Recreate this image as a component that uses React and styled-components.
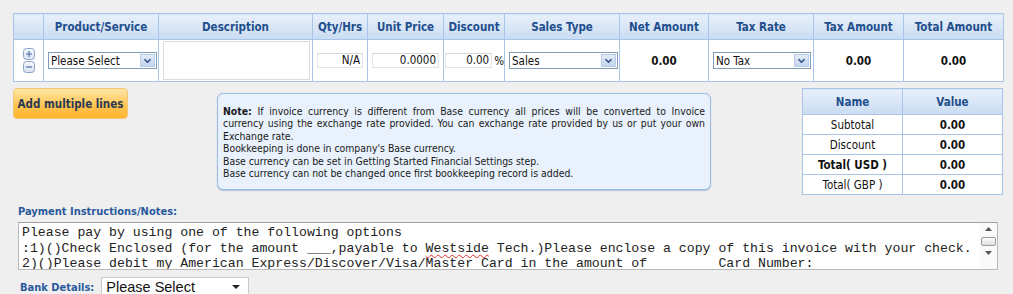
import React from "react";
import styled, { createGlobalStyle } from "styled-components";

const GlobalStyle = createGlobalStyle`
  body {
    margin: 0;
    background: #efefef;
    font-family: "DejaVu Sans Condensed", "DejaVu Sans", sans-serif;
    color: #111;
  }
`;

const Page = styled.div`
  width: 1013px;
  box-sizing: border-box;
  padding: 13px 10px 0 13px;
`;

const LineTable = styled.table`
  border-collapse: collapse;
  table-layout: fixed;
  width: 990px;
  background: #fff;
`;

const Th = styled.th`
  height: 25px;
  padding: 0;
  border: 1px solid #a9c4e8;
  background: linear-gradient(#e8f0fa, #c9dcf3);
  color: #1f4e8c;
  font-size: 11.5px;
  font-weight: bold;
  text-align: center;
`;

const Td = styled.td`
  height: 41px;
  padding: 0 4px;
  border: 1px solid #a9c4e8;
  text-align: center;
  font-size: 11.5px;
  font-weight: ${(p) => (p.$bold ? "bold" : "normal")};
`;

const PlusMinus = styled.div`
  display: flex;
  flex-direction: column;
  align-items: center;
  gap: 1px;
`;

const SmallBtn = styled.svg`
  display: block;
`;

const FakeSelect = styled.div`
  display: flex;
  align-items: center;
  width: ${(p) => p.$w}px;
  height: 17px;
  box-sizing: border-box;
  border: 1px solid #7f9db9;
  background: #fff;
  font-size: 11.5px;
  text-align: left;
`;

const SelectText = styled.span`
  flex: 1;
  padding-left: 2px;
  white-space: nowrap;
  overflow: hidden;
`;

const SelectArrow = styled.span`
  width: 15px;
  height: 13px;
  margin-right: 1px;
  display: flex;
  align-items: center;
  justify-content: center;
  background: linear-gradient(#e3ebf7, #c4d5ee);
  border: 1px solid #b8cbe8;
  box-sizing: border-box;
`;

const DescBox = styled.div`
  width: 147px;
  height: 39px;
  margin: 0 auto;
  border: 1px solid #dcdcdc;
  box-sizing: border-box;
  background: #fff;
`;

const NumInput = styled.div`
  width: ${(p) => p.$w}px;
  height: 15px;
  box-sizing: border-box;
  border: 1px solid #e4e4e4;
  border-top-color: #d6d6d6;
  padding-right: 2px;
  text-align: right;
  font-size: 11.5px;
  line-height: 13px;
  background: #fff;
`;

const InlineCell = styled.div`
  display: flex;
  align-items: center;
  justify-content: ${(p) => p.$justify || "center"};
  gap: 2px;
`;

const Middle = styled.div`
  display: flex;
  align-items: flex-start;
  margin-top: 6px;
`;

const AddButton = styled.button`
  width: 115px;
  height: 31px;
  border: 1px solid #f2c878;
  border-radius: 4px;
  background: linear-gradient(#ffe6a6, #ffc24e 60%, #ffb52e);
  color: #2b3a52;
  font-family: "DejaVu Sans Condensed", "DejaVu Sans", sans-serif;
  font-size: 11.5px;
  font-weight: bold;
  padding: 0;
`;

const NoteBox = styled.div`
  width: 494px;
  height: 97px;
  box-sizing: border-box;
  margin: 5px 0 0 89px;
  padding: 11px 5px 0 5px;
  background: #e8f1fc;
  border: 1px solid #9bbbe2;
  border-radius: 6px;
  box-shadow: 0 1px 1px rgba(120, 150, 200, 0.5);
  font-size: 10.4px;
  line-height: 12.4px;
  color: #1a1a1a;
`;

const JustLine = styled.div`
  text-align: justify;
  text-align-last: justify;
`;

const PlainLine = styled.div`
  white-space: nowrap;
`;

const SumTable = styled.table`
  margin-left: auto;
  border-collapse: collapse;
  table-layout: fixed;
  width: 200px;
  background: #fff;
`;

const SumTh = styled(Th)`
  height: 25px;
`;

const SumTd = styled.td`
  height: 19px;
  padding: 0;
  border: 1px solid #a9c4e8;
  text-align: center;
  font-size: 11.5px;
  font-weight: ${(p) => (p.$bold ? "bold" : "normal")};
`;

const SectionLabel = styled.div`
  margin: 10px 0 0 5px;
  color: #2a5a9c;
  font-size: 11px;
  font-weight: bold;
`;

const NotesBox = styled.div`
  display: flex;
  width: 980px;
  height: 48px;
  box-sizing: border-box;
  margin: 4px 0 0 5px;
  border: 1px solid #b9b9b9;
  border-top-color: #a0a0a0;
  background: #fff;
  overflow: hidden;
`;

const NotesText = styled.div`
  flex: 1;
  padding: 2px 0 0 3px;
  font-family: "Liberation Mono", monospace;
  font-size: 13.2px;
  line-height: 15.5px;
  white-space: pre;
  overflow: hidden;
  color: #222;
`;

const Misspelled = styled.span`
  text-decoration: underline wavy #e0302c;
  text-decoration-thickness: 1px;
  text-underline-offset: 2px;
`;

const ScrollBar = styled.div`
  width: 17px;
  display: flex;
  flex-direction: column;
  align-items: center;
  padding-top: 4px;
  background: #fafafa;
`;

const ScrollThumb = styled.div`
  width: 13px;
  height: 7px;
  margin: 6px 0 5px;
  border: 1px solid #9a9a9a;
  border-radius: 2px;
  background: linear-gradient(#fdfdfd, #dedede);
`;

const BankRow = styled.div`
  display: flex;
  align-items: center;
  margin: 7px 0 0 7px;
  gap: 7px;
`;

const BankLabel = styled.span`
  color: #2a5a9c;
  font-size: 11px;
  font-weight: bold;
`;

const BankSelect = styled.div`
  display: flex;
  align-items: center;
  width: 148px;
  height: 20px;
  box-sizing: border-box;
  border: 1px solid #c8c8c8;
  background: #fff;
  padding: 0 8px 0 4px;
  font-family: "Liberation Sans", Arial, sans-serif;
  font-size: 14.5px;
`;

const Caret = styled.span`
  margin-left: auto;
  width: 0;
  height: 0;
  border-left: 4px solid transparent;
  border-right: 4px solid transparent;
  border-top: 4px solid #222;
`;

const Chevron = () => (
  <svg width="9" height="6" viewBox="0 0 9 6">
    <path d="M1.5 1.2 L4.5 4.2 L7.5 1.2" fill="none" stroke="#2b4f87" strokeWidth="1.6" />
  </svg>
);

const Select = ({ w, value }) => (
  <FakeSelect $w={w}>
    <SelectText>{value}</SelectText>
    <SelectArrow>
      <Chevron />
    </SelectArrow>
  </FakeSelect>
);

const RowButton = ({ minus }) => (
  <SmallBtn width="12" height="12" viewBox="0 0 12 12">
    <defs>
      <linearGradient id={minus ? "gm" : "gp"} x1="0" y1="0" x2="0" y2="1">
        <stop offset="0" stopColor="#f4f7fc" />
        <stop offset="1" stopColor="#d7e2f2" />
      </linearGradient>
    </defs>
    <rect x="0.5" y="0.5" width="11" height="11" rx="3" fill={`url(#${minus ? "gm" : "gp"})`} stroke="#8aa2c6" />
    <path d={minus ? "M3 6 H9" : "M3 6 H9 M6 3 V9"} stroke="#4f6f9f" strokeWidth="1.2" />
  </SmallBtn>
);

const headers = [
  "",
  "Product/Service",
  "Description",
  "Qty/Hrs",
  "Unit Price",
  "Discount",
  "Sales Type",
  "Net Amount",
  "Tax Rate",
  "Tax Amount",
  "Total Amount",
];
const widths = [30, 115, 154, 55, 76, 61, 115, 89, 105, 90, 100];

const summary = [
  { name: "Subtotal", value: "0.00" },
  { name: "Discount", value: "0.00" },
  { name: "Total( USD )", value: "0.00", bold: true },
  { name: "Total( GBP )", value: "0.00" },
];

export default function App() {
  return (
    <Page>
      <GlobalStyle />
      <LineTable>
        <colgroup>
          {widths.map((w, i) => (
            <col key={i} style={{ width: w }} />
          ))}
        </colgroup>
        <thead>
          <tr>
            {headers.map((h, i) => (
              <Th key={i}>{h}</Th>
            ))}
          </tr>
        </thead>
        <tbody>
          <tr>
            <Td>
              <PlusMinus>
                <RowButton />
                <RowButton minus />
              </PlusMinus>
            </Td>
            <Td>
              <Select w={109} value="Please Select" />
            </Td>
            <Td>
              <DescBox />
            </Td>
            <Td>
              <InlineCell>
                <NumInput $w={50}>N/A</NumInput>
              </InlineCell>
            </Td>
            <Td>
              <InlineCell>
                <NumInput $w={68}>0.0000</NumInput>
              </InlineCell>
            </Td>
            <Td style={{ padding: "0 0 0 1px" }}>
              <InlineCell $justify="flex-start">
                <NumInput $w={50}>0.00</NumInput>
                <span>%</span>
              </InlineCell>
            </Td>
            <Td>
              <Select w={109} value="Sales" />
            </Td>
            <Td $bold>0.00</Td>
            <Td>
              <Select w={98} value="No Tax" />
            </Td>
            <Td $bold>0.00</Td>
            <Td $bold>0.00</Td>
          </tr>
        </tbody>
      </LineTable>

      <Middle>
        <AddButton>Add multiple lines</AddButton>
        <NoteBox>
          <JustLine>
            <b>Note:</b> If invoice currency is different from Base currency all prices will be converted to Invoice
          </JustLine>
          <JustLine>
            currency using the exchange rate provided. You can exchange rate provided by us or put your own
          </JustLine>
          <PlainLine>Exchange rate.</PlainLine>
          <PlainLine>Bookkeeping is done in company's Base currency.</PlainLine>
          <PlainLine>Base currency can be set in Getting Started Financial Settings step.</PlainLine>
          <PlainLine>Base currency can not be changed once first bookkeeping record is added.</PlainLine>
        </NoteBox>
        <SumTable>
          <colgroup>
            <col style={{ width: 100 }} />
            <col style={{ width: 100 }} />
          </colgroup>
          <thead>
            <tr>
              <SumTh>Name</SumTh>
              <SumTh>Value</SumTh>
            </tr>
          </thead>
          <tbody>
            {summary.map((r) => (
              <tr key={r.name}>
                <SumTd $bold={r.bold}>{r.name}</SumTd>
                <SumTd $bold>{r.value}</SumTd>
              </tr>
            ))}
          </tbody>
        </SumTable>
      </Middle>

      <SectionLabel>Payment Instructions/Notes:</SectionLabel>
      <NotesBox>
        <NotesText>
          {"Please pay by using one of the following options\n:1)()Check Enclosed (for the amount ___,payable to "}
          <Misspelled>Westside</Misspelled>
          {" Tech.)Please enclose a copy of this invoice with your check.\n2)()Please debit my American Express/Discover/Visa/Master Card in the amount of         Card Number:"}
        </NotesText>
        <ScrollBar>
          <svg width="7" height="4" viewBox="0 0 7 4">
            <path d="M0 4 L3.5 0 L7 4 Z" fill="#555" />
          </svg>
          <ScrollThumb />
          <svg width="7" height="4" viewBox="0 0 7 4">
            <path d="M0 0 L3.5 4 L7 0 Z" fill="#555" />
          </svg>
        </ScrollBar>
      </NotesBox>

      <BankRow>
        <BankLabel>Bank Details:</BankLabel>
        <BankSelect>
          Please Select
          <Caret />
        </BankSelect>
      </BankRow>
    </Page>
  );
}
